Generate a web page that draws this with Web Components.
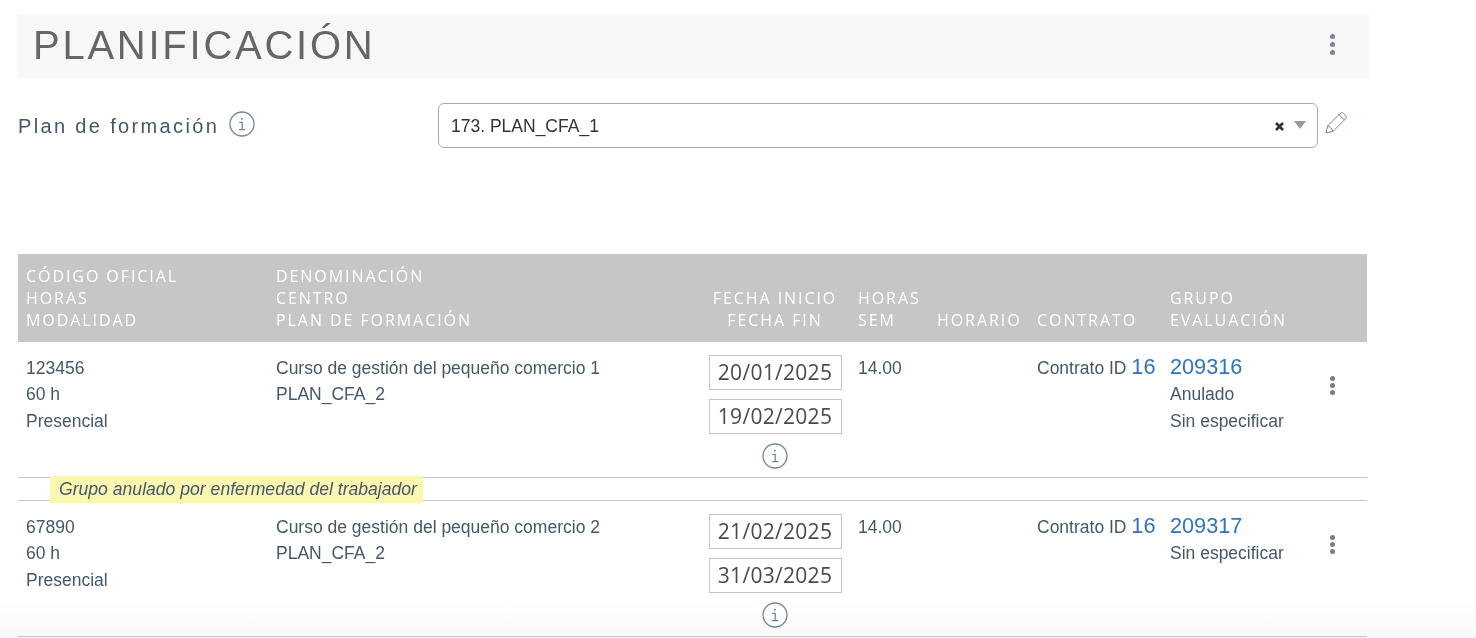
<!DOCTYPE html>
<html lang="es">
<head>
<meta charset="utf-8">
<title>Planificación</title>
<style>
  html, body { margin: 0; background: #fff; height: 638px; overflow: hidden; }
  body { font-family: "Liberation Sans", Arial, sans-serif; color: #44586a; }
</style>
</head>
<body>
<planning-page></planning-page>

<script>
class InfoIcon extends HTMLElement {
  constructor() {
    super();
    this.attachShadow({ mode: 'open' }).innerHTML = `
      <style>:host { display: inline-flex; width: 26px; height: 26px; } svg { width: 100%; height: 100%; }</style>
      <svg viewBox="0 0 26 26" fill="none" stroke="#74869a" stroke-width="1.3" stroke-linecap="round">
        <circle cx="13" cy="13" r="12"/>
        <circle cx="12.8" cy="7.8" r="1" fill="#74869a" stroke="none"/>
        <path d="M10.8 11.4h2.4v7M10.4 18.6h5.4"/>
      </svg>`;
  }
}

class KebabMenu extends HTMLElement {
  constructor() {
    super();
    this.attachShadow({ mode: 'open' }).innerHTML = `
      <style>
        :host { display: inline-flex; flex-direction: column; gap: var(--gap, 2px); }
        i { width: var(--size, 5px); height: var(--size, 5px); border-radius: 50%; background: var(--dot, #7d7d7d); }
      </style>
      <i></i><i></i><i></i>`;
  }
}

class PageTitle extends HTMLElement {
  constructor() {
    super();
    this.attachShadow({ mode: 'open' }).innerHTML = `
      <style>
        :host { display: flex; align-items: center; justify-content: space-between; box-sizing: border-box;
                width: 1352px; height: 64px; margin-left: 17px; padding: 0 34px 3px 16px; background: #f7f7f7; }
        h1 { margin: 0; font: 400 40px/1 "Liberation Sans", Arial, sans-serif; letter-spacing: 2.75px; color: #666; }
        kebab-menu { --dot: #74869a; --size: 5.5px; --gap: 2.5px; }
      </style>
      <h1><slot></slot></h1>
      <kebab-menu></kebab-menu>`;
  }
}

class PlanField extends HTMLElement {
  constructor() {
    super();
    this.attachShadow({ mode: 'open' }).innerHTML = `
      <style>
        :host { display: flex; margin: 25px 0 0 18px; height: 45px; }
        .label { width: 420px; display: flex; align-items: flex-start; gap: 10px; padding-top: 8px; box-sizing: border-box;
                 font: 400 20px/30px "Liberation Sans", Arial, sans-serif; letter-spacing: 2.35px; color: #44586a; }
        .select { width: 880px; box-sizing: border-box; border: 1px solid #aaa; border-radius: 6px;
                  display: flex; align-items: center; padding: 2px 11px 0 12px;
                  font: 400 17.5px "Liberation Sans", Arial, sans-serif; color: #333; }
        .value { flex: 1; }
        .clear { width: 11px; height: 11px; margin: 0 9px 0 0; }
        .caret { width: 0; height: 0; border: 6px solid transparent; border-top: 8px solid #999; border-bottom: 0; margin-top: -4px; }
        .pencil { width: 23px; height: 23px; margin: 8px 0 0 7px; }
      </style>
      <div class="label"><slot name="label"></slot><info-icon></info-icon></div>
      <div class="select">
        <span class="value"><slot name="value"></slot></span>
        <svg class="clear" viewBox="0 0 11 11"><path d="M2 2l7 7M9 2l-7 7" stroke="#333" stroke-width="2.6"/></svg>
        <span class="caret"></span>
      </div>
      <svg class="pencil" viewBox="0 0 23 23" fill="none" stroke="#74869a" stroke-width="1" stroke-linejoin="round">
        <path d="M1 22l1.6-7L15.4 2.2a2 2 0 0 1 2.8 0l2.6 2.6a2 2 0 0 1 0 2.8L8 20.4z"/>
        <path d="M14 3.6l5.4 5.4M2.6 15c2 .4 4.8 3 5.4 5.4"/>
      </svg>`;
  }
}

const GRID = '250px 432px 150px 79px 100px 133px 138px 1fr';

class TableHead extends HTMLElement {
  constructor() {
    super();
    this.attachShadow({ mode: 'open' }).innerHTML = `
      <style>
        :host { display: grid; grid-template-columns: ${GRID}; height: 88px; background: #c6c6c6; align-items: end;
                padding-bottom: 11px; box-sizing: border-box; color: #fff;
                font: 400 16px/22px "Open Sans", sans-serif; letter-spacing: 1.93px; }
        div { padding-left: 8px; white-space: nowrap; }
        .c { text-align: center; padding-left: 0; }
      </style>
      <div>CÓDIGO OFICIAL<br>HORAS<br>MODALIDAD</div>
      <div>DENOMINACIÓN<br>CENTRO<br>PLAN DE FORMACIÓN</div>
      <div class="c">FECHA INICIO<br>FECHA FIN</div>
      <div>HORAS<br>SEM</div>
      <div>HORARIO</div>
      <div>CONTRATO</div>
      <div>GRUPO<br>EVALUACIÓN</div>
      <div></div>`;
  }
}

class DateBox extends HTMLElement {
  constructor() {
    super();
    this.attachShadow({ mode: 'open' }).innerHTML = `
      <style>
        :host { display: block; box-sizing: border-box; width: 133px; height: 35px; border: 1px solid #c4c4c4;
                text-align: center; font: 400 21px/33px "Open Sans", sans-serif; letter-spacing: .3px; color: #4a4a4a; }
      </style>
      <slot></slot>`;
  }
}

class TableRow extends HTMLElement {
  connectedCallback() {
    if (this.shadowRoot) return;
    const a = n => this.getAttribute(n) || '';
    const status = a('status');
    this.attachShadow({ mode: 'open' }).innerHTML = `
      <style>
        :host { display: grid; grid-template-columns: ${GRID}; height: 136px; box-sizing: border-box;
                border-bottom: 1px solid #c8c8c8; font: 400 17.5px/26.3px "Liberation Sans", Arial, sans-serif; color: #44586a; }
        .cell { padding: 13px 0 0 8px; white-space: nowrap; }
        .dates { padding: 13px 0 0; display: flex; flex-direction: column; align-items: center; gap: 9px; }
        a { color: #2f75bb; text-decoration: none; font-size: 21.7px; line-height: 1; }
        .menu { display: flex; justify-content: center; align-items: flex-start; padding-top: 34px; }
        .menu kebab-menu { margin-left: -3px; }
      </style>
      <div class="cell">${a('code')}<br>60 h<br>Presencial</div>
      <div class="cell">${a('course')}<br>PLAN_CFA_2</div>
      <div class="dates"><date-box>${a('start')}</date-box><date-box>${a('end')}</date-box><info-icon></info-icon></div>
      <div class="cell">14.00</div>
      <div class="cell"></div>
      <div class="cell">Contrato ID <a>16</a></div>
      <div class="cell"><a>${a('group')}</a><br>${status ? status + '<br>' : ''}Sin especificar</div>
      <div class="menu"><kebab-menu></kebab-menu></div>`;
  }
}

class RowNote extends HTMLElement {
  constructor() {
    super();
    this.attachShadow({ mode: 'open' }).innerHTML = `
      <style>
        :host { display: block; height: 23px; border-bottom: 1px solid #c8c8c8; box-sizing: border-box; position: relative; }
        span { position: absolute; left: 32px; top: -2px; height: 27px; padding: 0 6px 0 9px; background: #fbf6b0;
               font: italic 400 17.6px/27px "Liberation Sans", Arial, sans-serif; color: #44586a; white-space: nowrap; }
      </style>
      <span><slot></slot></span>`;
  }
}

class PlanningPage extends HTMLElement {
  constructor() {
    super();
    this.attachShadow({ mode: 'open' }).innerHTML = `
      <style>
        :host { display: block; padding-top: 14px; position: relative; height: 638px; box-sizing: border-box; overflow: hidden; }
        .table { width: 1349px; margin: 106px 0 0 18px; }
        .fade { position: absolute; left: 0; right: 0; bottom: 0; height: 40px; pointer-events: none; mix-blend-mode: multiply;
                background: linear-gradient(to bottom, #fff, #f8f8f8); }
      </style>
      <page-title>PLANIFICACIÓN</page-title>
      <plan-field><span slot="label">Plan de formación</span><span slot="value">173. PLAN_CFA_1</span></plan-field>
      <div class="table">
        <table-head></table-head>
        <table-row code="123456" course="Curso de gestión del pequeño comercio 1" start="20/01/2025" end="19/02/2025" group="209316" status="Anulado"></table-row>
        <row-note>Grupo anulado por enfermedad del trabajador</row-note>
        <table-row code="67890" course="Curso de gestión del pequeño comercio 2" start="21/02/2025" end="31/03/2025" group="209317"></table-row>
      </div>
      <div class="fade"></div>`;
  }
}

customElements.define('info-icon', InfoIcon);
customElements.define('kebab-menu', KebabMenu);
customElements.define('page-title', PageTitle);
customElements.define('plan-field', PlanField);
customElements.define('table-head', TableHead);
customElements.define('date-box', DateBox);
customElements.define('table-row', TableRow);
customElements.define('row-note', RowNote);
customElements.define('planning-page', PlanningPage);
</script>
</body>
</html>
